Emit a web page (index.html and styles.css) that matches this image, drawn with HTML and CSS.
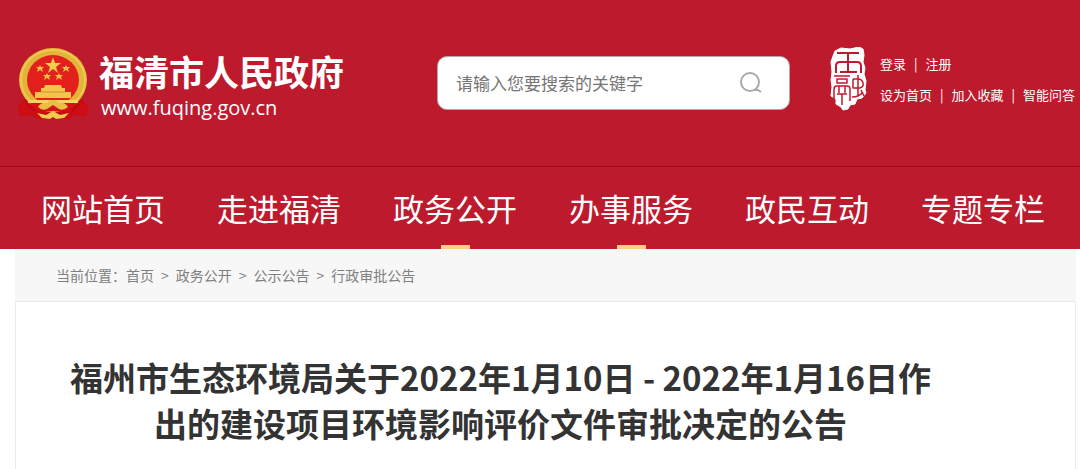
FILE: index.html
```html
<!DOCTYPE html>
<html lang="zh-CN">
<head>
    <meta charset="UTF-8">
    <meta name="viewport" content="width=device-width, initial-scale=1.0">
    <title>福清市人民政府</title>
    <link rel="stylesheet" href="styles.css">
</head>
<body>
    <header class="header">
        <div class="logo">
            <svg class="emblem" viewBox="0 0 70 74" aria-hidden="true">
                <path d="M9 50 L0 60 L2 70 L13 69 L20 73 L50 73 L57 69 L68 70 L70 60 L61 50 Z" fill="#c90d12"/>
                <ellipse cx="35" cy="34" rx="34" ry="32" fill="#e3b43a"/>
                <ellipse cx="35" cy="34" rx="32" ry="30" fill="none" stroke="#efc850" stroke-width="2"/>
                <ellipse cx="35" cy="34" rx="26" ry="25" fill="#e2211c"/>
                <path d="M35 11 L37 17 L43 17 L38 21 L40 27 L35 23 L30 27 L32 21 L27 17 L33 17 Z" fill="#f4cc4c"/>
                <path id="star" d="M22 19 l1 2 3 0 -2 2 1 3 -3 -2 -3 2 1 -3 -2 -2 3 0z" fill="#f0bd45"/>
                <use href="#star" x="26"/>
                <use href="#star" x="7" y="8"/>
                <use href="#star" x="19" y="8"/>
                <path d="M24 42 h2 l1 -3 h16 l1 3 h3 v4 h6 v6 H17 v-6 h6 v-4z" fill="#f2c64d"/>
                <path d="M23 46 h24" stroke="#d98e2b" stroke-width="1"/>
                <path d="M10 54 h50 v3 H10z" fill="#f6d45f"/>
                <path d="M12 57 h46 l-5 8 H17z" fill="#d51216"/>
                <path d="M20 61 q3 -5 9 -4 l3 -3 h6 l3 3 q6 -1 9 4 q-5 4 -9 2 l-6 -4 -6 4 q-5 2 -9 -2z" fill="#eabd43"/>
                <path d="M0 60 l9 -3 11 7 -6 5 -12 1z M70 60 l-9 -3 -11 7 6 5 12 1z" fill="#cd0c13"/>
                <path d="M19 67 l9 2 7 -4 7 4 9 -2 -5 5 -8 1 -3 -2 -3 2 -8 -1z" fill="#f0cc52"/>
                <path d="M9 58 l7 7 M61 58 l-7 7" stroke="#98070e" stroke-width="1"/>
            </svg>
            <div class="site">
                <div class="site-name">福清市人民政府</div>
                <div class="site-url">www.fuqing.gov.cn</div>
            </div>
        </div>

        <form class="search">
            <input type="text" name="keyword" placeholder="请输入您要搜索的关键字" aria-label="请输入您要搜索的关键字">
            <button type="submit" aria-label="搜索">
                <svg viewBox="0 0 22 22" aria-hidden="true">
                    <circle cx="10" cy="10" r="9"/>
                    <path d="M15 18 h3 l3 2"/>
                </svg>
            </button>
        </form>

        <div class="tools">
            <svg class="seal" viewBox="0 0 38 64" aria-hidden="true">
                <path d="M5 4 L11 1 L20 2 L29 0 L33 2 L34 8 L33 15 L35 21 L34 27 L36 34 L35 43 L36 46 L32 51 L27 52 L25 57 L20 58 L18 62 L13 63 L11 60 L6 57 L6 52 L1 49 L2 40 L1 33 L2 25 L1 15 L3 9 Z" fill="#fff" stroke="#fff" stroke-linejoin="round"/>
                <g fill="none" stroke="#bd1a2d" stroke-width="2" stroke-linejoin="round">
                    <path d="M7 6 H29 M18 6 V25 M10 25 H27 M6 26 V19 Q6 15 10 15 H27 Q31 15 31 19 V26"/>
                    <path stroke-width="1.500" d="M4 29 H20 M7 32 H17 V36 H7Z M4 54 V42 Q4 39 7 39 H17 Q20 39 20 42 V54 M9 39 V46 M15 39 V46 M7 47 H17 M12 47 V58"/>
                    <path stroke-width="1.500" d="M28 28 V48 M23 32 V41 H30 Q34 40 33 36 Q32 32 28 32 H23 M22 50 Q29 50 33 45 M31 43 L34 49"/>
                </g>
            </svg>
            <div class="tool-links">
                <div class="tool-row">
                    <a href="#">登录</a><span>|</span><a href="#">注册</a>
                </div>
                <div class="tool-row">
                    <a href="#">设为首页</a><span>|</span><a href="#">加入收藏</a><span>|</span><a href="#">智能问答</a>
                </div>
            </div>
        </div>
    </header>

    <nav class="nav">
        <a href="#">网站首页</a>
        <a href="#">走进福清</a>
        <a href="#" class="active">政务公开</a>
        <a href="#" class="active">办事服务</a>
        <a href="#">政民互动</a>
        <a href="#">专题专栏</a>
    </nav>

    <main class="content">
        <div class="breadcrumb">
            <span>当前位置：</span>
            <a href="#">首页</a>
            <span class="sep">&gt;</span>
            <a href="#">政务公开</a>
            <span class="sep">&gt;</span>
            <a href="#">公示公告</a>
            <span class="sep">&gt;</span>
            <a href="#">行政审批公告</a>
        </div>
        <article class="article">
            <h1>福州市生态环境局关于2022年1月10日 - 2022年1月16日作出的建设项目环境影响评价文件审批决定的公告</h1>
        </article>
    </main>
</body>
</html>
```
FILE: styles.css
```css
* {
    box-sizing: border-box;
}
body {
    margin: 0;
    background-color: #fff;
    color: #333;
    font-family: "Noto Sans CJK SC", sans-serif;
}
a {
    color: inherit;
    text-decoration: none;
}

/* header */
.header {
    display: grid;
    grid-template-columns: 419fr 353fr 290fr;
    align-items: center;
    padding: 46px 0 46px 18px;
    background-color: #bd1a2d;
    color: #fff;
}
.logo {
    display: flex;
    align-items: center;
    gap: 11px;
}
.emblem {
    width: 70px;
    height: 74px;
}
.site {
    padding-top: 4px;
}
.site-name {
    font-size: 35px;
    font-weight: bold;
    line-height: 42px;
}
.site-url {
    padding: 4px 0 0 2px;
    font-family: "Open Sans", sans-serif;
    font-size: 20px;
    line-height: 24px;
}
.search {
    display: flex;
    align-items: center;
    height: 54px;
    padding: 0 27px 0 18px;
    border: 1px solid #b5a5a5;
    border-radius: 10px;
    background-color: #fff;
}
.search input {
    flex: 1;
    min-width: 0;
    padding: 0 0 2px;
    border: 0;
    outline: 0;
    background: none;
    font-family: inherit;
    font-size: 17px;
}
.search input::placeholder {
    color: #757575;
}
.search button {
    display: flex;
    padding: 0;
    border: 0;
    background: none;
    cursor: pointer;
}
.search svg {
    width: 22px;
    height: 22px;
    fill: none;
    stroke: #aaa;
    stroke-width: 2;
}
.tools {
    display: flex;
    align-items: center;
    gap: 12px;
    padding: 0 0 8px 40px;
}
.seal {
    flex: none;
    width: 38px;
    height: 64px;
}
.tool-links {
    display: grid;
    gap: 11px;
    font-size: 13px;
    line-height: 20px;
    white-space: nowrap;
}
.tool-row {
    display: flex;
    gap: 8px;
}

/* main menu */
.nav {
    display: grid;
    grid-template-columns: repeat(6, 1fr);
    padding: 0 9px 0 15px;
    border-top: 1px solid #930f20;
    background-color: #bd1a2d;
    color: #fff;
    font-size: 31px;
    line-height: 82px;
    text-align: center;
}
.nav a {
    position: relative;
}
.nav .active::after {
    content: "";
    position: absolute;
    left: 50%;
    bottom: 0;
    width: 29px;
    height: 4px;
    margin-left: -14px;
    background-color: #ffcf88;
}

/* page body */
.content {
    margin: 0 4px 0 15px;
}
.breadcrumb {
    display: flex;
    padding-left: 41px;
    background-color: #f7f7f7;
    color: #808080;
    font-size: 14px;
    line-height: 52px;
}
.breadcrumb .sep {
    padding: 0 7px;
}
.article {
    padding: 52px 130px 24px 40px;
    border: 1px solid #ebebeb;
    border-bottom: 0;
}
.article h1 {
    margin: 0;
    font-size: 33px;
    font-weight: bold;
    line-height: 46px;
    text-align: center;
}
```
